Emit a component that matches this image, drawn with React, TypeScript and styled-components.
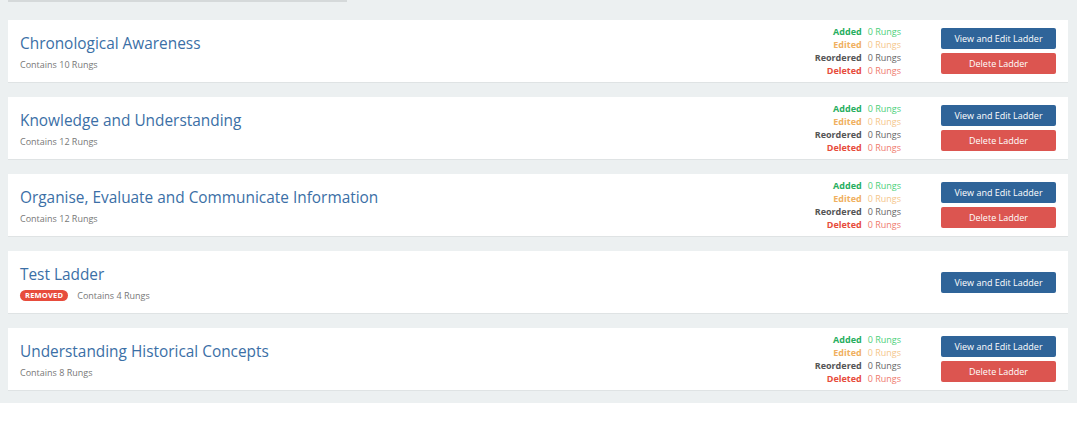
import React from "react";
import styled, { createGlobalStyle } from "styled-components";

const GlobalStyle = createGlobalStyle`
  html, body {
    margin: 0;
    padding: 0;
    background: #ffffff;
    font-family: "Open Sans", "Liberation Sans", sans-serif;
  }
`;

const Page = styled.div`
  background: #ecf0f1;
  padding: 0 9px 12px 8px;
`;

const TopRule = styled.div`
  width: 339px;
  height: 2px;
  background: #d5d9da;
  margin-bottom: 18px;
`;

const List = styled.div`
  display: flex;
  flex-direction: column;
  gap: 14px;
`;

const Card = styled.div`
  background: #ffffff;
  height: 63px;
  box-sizing: border-box;
  border-bottom: 1px solid #dfe3e4;
  display: flex;
  align-items: center;
  padding: 0 12px 0 12px;
`;

const Info = styled.div`
  flex: 1;
  display: flex;
  flex-direction: column;
  gap: 4px;
  padding-top: 3px;
`;

const Title = styled.div`
  font-size: 15.4px;
  color: #3b6fa6;
  line-height: 20px;
`;

const Meta = styled.div`
  display: flex;
  align-items: center;
  gap: 9px;
  font-size: 9px;
  color: #777777;
  line-height: 13px;
`;

const Badge = styled.span`
  background: #e74c3c;
  color: #ffffff;
  font-weight: 700;
  font-size: 7.5px;
  letter-spacing: 0.2px;
  padding: 0 5px;
  line-height: 11px;
  border-radius: 6px;
`;

const Stats = styled.div`
  display: grid;
  grid-template-columns: auto auto;
  column-gap: 6px;
  font-size: 9px;
  line-height: 13px;
  margin-right: 40px;
`;

const Label = styled.span<{ $c: string }>`
  text-align: right;
  font-weight: 700;
  color: ${(p) => p.$c};
`;

const Value = styled.span<{ $c: string }>`
  color: ${(p) => p.$c};
`;

const Buttons = styled.div`
  display: flex;
  flex-direction: column;
  gap: 4px;
  width: 115px;
`;

const Button = styled.button<{ $kind: "edit" | "delete" }>`
  height: 21px;
  border: none;
  border-radius: 2px;
  color: #ffffff;
  font-family: "Open Sans", "Liberation Sans", sans-serif;
  font-size: 9px;
  padding: 0;
  cursor: pointer;
  background: ${(p) => (p.$kind === "edit" ? "#2f6499" : "#dc5550")};
`;

type Ladder = { name: string; rungs: number; removed?: boolean };

const ladders: Ladder[] = [
  { name: "Chronological Awareness", rungs: 10 },
  { name: "Knowledge and Understanding", rungs: 12 },
  { name: "Organise, Evaluate and Communicate Information", rungs: 12 },
  { name: "Test Ladder", rungs: 4, removed: true },
  { name: "Understanding Historical Concepts", rungs: 8 },
];

const statRows = [
  { label: "Added", c: "#27ae60", v: "#4cd07a" },
  { label: "Edited", c: "#f0b060", v: "#f5c68a" },
  { label: "Reordered", c: "#555555", v: "#666666" },
  { label: "Deleted", c: "#e74c3c", v: "#ef7a6d" },
];

export default function App() {
  return (
    <>
      <GlobalStyle />
      <Page>
        <TopRule />
        <List>
          {ladders.map((l) => (
            <Card key={l.name}>
              <Info>
                <Title>{l.name}</Title>
                <Meta>
                  {l.removed && <Badge>REMOVED</Badge>}
                  <span>Contains {l.rungs} Rungs</span>
                </Meta>
              </Info>
              {!l.removed && (
                <Stats>
                  {statRows.map((s) => (
                    <React.Fragment key={s.label}>
                      <Label $c={s.c}>{s.label}</Label>
                      <Value $c={s.v}>0 Rungs</Value>
                    </React.Fragment>
                  ))}
                </Stats>
              )}
              <Buttons>
                <Button $kind="edit">View and Edit Ladder</Button>
                {!l.removed && <Button $kind="delete">Delete Ladder</Button>}
              </Buttons>
            </Card>
          ))}
        </List>
      </Page>
    </>
  );
}
